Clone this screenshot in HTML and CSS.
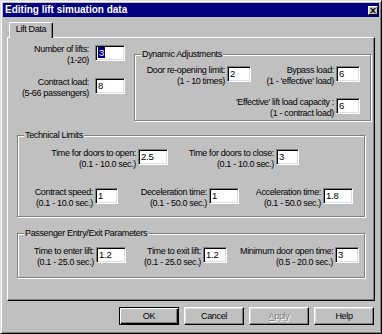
FILE: index.html
```html
<!DOCTYPE html>
<html>
<head>
<meta charset="utf-8">
<link rel="stylesheet" href="styles.css">
</head>
<body>
<div class="window">
  <div class="titlebar">
    <span class="title">Editing lift simuation data</span>
    <span class="close"><svg width="6" height="5" viewBox="0 0 6 5"><path d="M0 0h1.5l1.5 1.5 1.5-1.5h1.5l-2.2 2.5 2.2 2.5h-1.5l-1.5-1.5-1.5 1.5h-1.5l2.2-2.5z" fill="#000"/></svg></span>
  </div>
  <div class="tabs"><div class="tab">Lift Data</div></div>
  <div class="panel">
    <div class="toprow">
      <div class="leftcol">
        <div class="field wide">
          <div class="lbl w70">Number of lifts:<br>(1-20)</div>
          <div class="edit w30"><span class="sel">3</span></div>
        </div>
        <div class="field wide mt13">
          <div class="lbl w70">Contract load:<br>(5-66 passengers)</div>
          <div class="edit w30">8</div>
        </div>
      </div>
      <div class="group dyn">
        <span class="legend">Dynamic Adjustments</span>
        <div class="grow r1">
          <div class="field">
            <div class="lbl w84">Door re-opening limit:<br>(1 - 10 times)</div>
            <div class="edit w24">2</div>
          </div>
          <div class="field">
            <div class="lbl w83">Bypass load:<br>(1 - 'effective' load)</div>
            <div class="edit w24">6</div>
          </div>
        </div>
        <div class="grow r2">
          <div class="field">
            <div class="lbl w110">'Effective' lift load capacity :<br>(1 - contract load)</div>
            <div class="edit w24">6</div>
          </div>
        </div>
      </div>
    </div>

    <div class="group tech">
      <span class="legend">Technical Limits</span>
      <div class="trow t1">
        <div class="field">
          <div class="lbl w96">Time for doors to open:<br>(0.1 - 10.0 sec.)</div>
          <div class="edit w30">2.5</div>
        </div>
        <div class="field ml10">
          <div class="lbl w96">Time for doors to close:<br>(0.1 - 10.0 sec.)</div>
          <div class="edit w23">3</div>
        </div>
      </div>
      <div class="trow t2">
        <div class="field">
          <div class="lbl w65">Contract speed:<br>(0.1 - 10.0 sec.)</div>
          <div class="edit w23">1</div>
        </div>
        <div class="field ml12">
          <div class="lbl w77">Deceleration time:<br>(0.1 - 50.0 sec.)</div>
          <div class="edit w30">1</div>
        </div>
        <div class="field ml11">
          <div class="lbl w71">Acceleration time:<br>(0.1 - 50.0 sec.)</div>
          <div class="edit w30">1.8</div>
        </div>
      </div>
    </div>

    <div class="group pass">
      <span class="legend">Passenger Entry/Exit Parameters</span>
      <div class="trow p1">
        <div class="field">
          <div class="lbl w64">Time to enter lift:<br>(0.1 - 25.0 sec.)</div>
          <div class="edit w30">1.2</div>
        </div>
        <div class="field ml14">
          <div class="lbl w61">Time to exit lift:<br>(0.1 - 25.0 sec.)</div>
          <div class="edit w24">1.2</div>
        </div>
        <div class="field ml13">
          <div class="lbl w93">Minimum door open time:<br>(0.5 - 20.0 sec.)</div>
          <div class="edit w24">3</div>
        </div>
      </div>
    </div>
  </div>
  <div class="buttons">
    <div class="btn default">OK</div>
    <div class="btn">Cancel</div>
    <div class="btn disabled"><span class="u">A</span>pply</div>
    <div class="btn">Help</div>
  </div>
</div>
</body>
</html>
```
FILE: styles.css
```css
html, body {
  margin: 0;
  padding: 0;
  background: #c0c0c0;
}
body {
  font-family: "Liberation Sans", Arial, sans-serif;
  font-size: 9px;
  letter-spacing: -0.35px;
  color: #000;
}
.window {
  width: 382px;
  height: 334px;
  box-sizing: border-box;
  background: #c0c0c0;
  border: 1px solid;
  border-color: #dfdfdf #000 #000 #dfdfdf;
  box-shadow: inset 1px 1px 0 #fff, inset -1px -1px 0 #808080;
  padding: 2px;
  display: flex;
  flex-direction: column;
}
.titlebar {
  height: 14px;
  flex: none;
  background: #000080;
  display: flex;
  align-items: center;
  justify-content: space-between;
  padding: 0 1px 0 2px;
}
.title {
  color: #fff;
  font-weight: bold;
  font-size: 10px;
  letter-spacing: 0;
  line-height: 14px;
}
.close {
  width: 10px;
  height: 9px;
  box-sizing: border-box;
  background: #c0c0c0;
  border: 1px solid;
  border-color: #fff #000 #000 #fff;
  display: flex;
  align-items: center;
  justify-content: center;
}
.close svg { display: block; }
.tabs {
  display: flex;
  padding-left: 6px;
  margin-top: 5px;
  flex: none;
}
.tab {
  position: relative;
  z-index: 1;
  width: 44px;
  height: 16px;
  box-sizing: border-box;
  background: #c0c0c0;
  border-top: 1px solid #fff;
  border-left: 1px solid #fff;
  border-right: 1px solid #000;
  border-radius: 2px 2px 0 0;
  box-shadow: inset -1px 0 0 #808080;
  margin-bottom: -1px;
  text-align: center;
  line-height: 13px;
}
.panel {
  flex: none;
  margin-left: 4px;
  width: 368px;
  height: 264px;
  box-sizing: border-box;
  border: 1px solid;
  border-color: #fff #000 #000 #fff;
  box-shadow: inset -1px -1px 0 #808080;
}
.toprow {
  display: flex;
  align-items: flex-start;
}
.leftcol {
  margin-left: 11px;
  margin-top: 7px;
}
.field {
  display: flex;
  align-items: flex-start;
  gap: 2px;
}
.field.wide { gap: 6px; }
.mt13 { margin-top: 13px; }
.ml10 { margin-left: 10px; }
.ml11 { margin-left: 11px; }
.ml12 { margin-left: 12px; }
.ml13 { margin-left: 13px; }
.ml14 { margin-left: 14px; }
.lbl {
  text-align: right;
  line-height: 10.5px;
  margin-top: -1px;
  white-space: nowrap;
  flex: none;
}
.w61 { width: 61px; }
.w64 { width: 64px; }
.w65 { width: 65px; }
.w70 { width: 70px; }
.w71 { width: 71px; }
.w77 { width: 77px; }
.w83 { width: 83px; }
.w84 { width: 84px; }
.w93 { width: 93px; }
.w96 { width: 96px; }
.w110 { width: 110px; }
.edit {
  flex: none;
  box-sizing: border-box;
  height: 16px;
  background: #fff;
  border: 1px solid;
  border-color: #808080 #fff #fff #808080;
  box-shadow: inset 1px 1px 0 #000, inset -1px -1px 0 #dfdfdf;
  padding-left: 2px;
  line-height: 14px;
  font-size: 9.5px;
  letter-spacing: -0.2px;
}
.edit.w23 { width: 23px; }
.edit.w24 { width: 24px; }
.edit.w30 { width: 30px; }
.sel {
  background: #000080;
  color: #fff;
  padding: 0 1px;
}
.group {
  position: relative;
  box-sizing: border-box;
  border: 1px solid #808080;
  box-shadow: 1px 1px 0 #fff, inset 1px 1px 0 #fff;
}
.legend {
  position: absolute;
  top: -6px;
  left: 6px;
  padding: 0 1px;
  background: #c0c0c0;
  line-height: 10px;
  white-space: nowrap;
}
.dyn {
  margin-left: 9px;
  margin-top: 16px;
  width: 237px;
  height: 67px;
}
.grow {
  display: flex;
  justify-content: flex-end;
  padding-right: 10px;
}
.r1 { margin-top: 11px; }
.r2 { margin-top: 12px; }
.tech {
  margin-left: 9px;
  margin-top: 14px;
  width: 348px;
  height: 82px;
}
.trow {
  display: flex;
  align-items: flex-start;
}
.t1 { margin-top: 13px; padding-left: 22px; }
.t2 { margin-top: 19px; padding-left: 10px; }
.pass {
  margin-left: 9px;
  margin-top: 16px;
  width: 348px;
  height: 45px;
}
.p1 { margin-top: 13px; padding-left: 12px; }
.buttons {
  display: flex;
  justify-content: flex-end;
  gap: 5px;
  margin-top: 6px;
  padding-right: 5px;
}
.btn {
  width: 60px;
  height: 18px;
  box-sizing: border-box;
  background: #c0c0c0;
  border: 1px solid;
  border-color: #fff #000 #000 #fff;
  box-shadow: inset -1px -1px 0 #808080, inset 1px 1px 0 #dfdfdf;
  text-align: center;
  line-height: 16px;
}
.btn.default {
  border-color: #000;
  box-shadow: inset 1px 1px 0 #fff, inset -1px -1px 0 #000, inset -2px -2px 0 #808080;
}
.btn.disabled {
  color: #808080;
  text-shadow: 1px 1px 0 #fff;
}
.u { text-decoration: underline; }
```
